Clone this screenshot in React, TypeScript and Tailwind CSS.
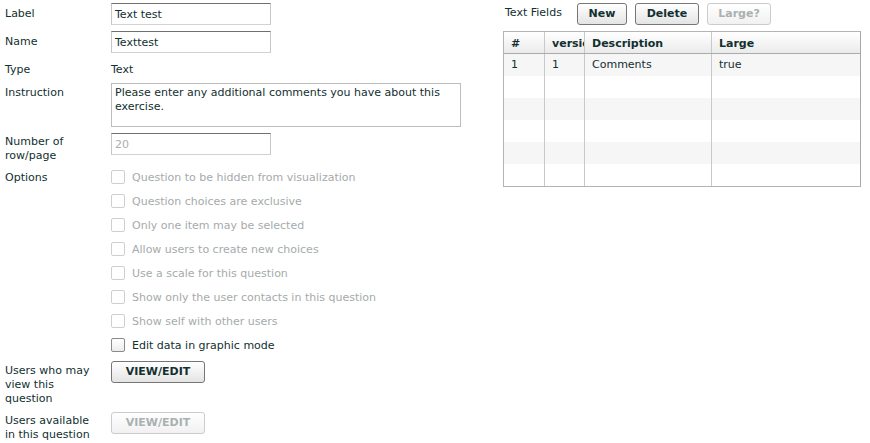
import React from "react";

const font = { fontFamily: '"DejaVu Sans", Verdana, sans-serif' };

function Label({ children, pt }: { children: React.ReactNode; pt: string }) {
  return <div className={`w-[106px] shrink-0 ${pt} text-[#12302f]`}>{children}</div>;
}

function TextInput({ value, disabled }: { value: string; disabled?: boolean }) {
  return (
    <div
      className={`w-[160px] h-[22px] border border-t-[#707070] border-x-[#c6c6c6] border-b-[#d2d2d2] bg-white px-[3px] pt-[4px] ${
        disabled ? "text-[#a9aeae]" : "text-[#12302f]"
      }`}
    >
      {value}
    </div>
  );
}

function Check({ label, enabled }: { label: string; enabled?: boolean }) {
  return (
    <div className="flex items-start h-[14px]">
      <div
        className={`w-[14px] h-[14px] rounded-[2px] border ${
          enabled ? "border-[#8a8a8a] bg-gradient-to-b from-white to-[#ececec]" : "border-[#cfcfcf] bg-white"
        }`}
      />
      <span className={`ml-[7px] pt-[1px] ${enabled ? "text-[#12302f]" : "text-[#a5abab]"}`}>{label}</span>
    </div>
  );
}

function Btn({ children, w, disabled }: { children: React.ReactNode; w: string; disabled?: boolean }) {
  return (
    <div
      className={`${w} h-[22px] shrink-0 rounded-[3px] border flex items-center justify-center font-bold bg-gradient-to-b ${
        disabled
          ? "border-[#cccccc] text-[#a9b1b1] from-white to-[#f1f1f1]"
          : "border-[#767676] text-[#12302f] from-white to-[#e4e4e4]"
      }`}
    >
      {children}
    </div>
  );
}

const cols = ["w-[41px]", "w-[40px]", "w-[127px]", "flex-1"];

function Row({ cells, shaded }: { cells: string[]; shaded?: boolean }) {
  return (
    <div className={`flex h-[22px] ${shaded ? "bg-[#f6f6f6]" : "bg-white"}`}>
      {cols.map((c, i) => (
        <div
          key={i}
          className={`${c} ${i < 3 ? "border-r border-[#c9c9c9]" : ""} pl-[7px] pt-[4px] overflow-hidden whitespace-nowrap text-[#12302f]`}
        >
          {cells[i]}
        </div>
      ))}
    </div>
  );
}

export default function App() {
  const opts = [
    "Question to be hidden from visualization",
    "Question choices are exclusive",
    "Only one item may be selected",
    "Allow users to create new choices",
    "Use a scale for this question",
    "Show only the user contacts in this question",
    "Show self with other users",
  ];
  return (
    <div style={font} className="w-[870px] h-[443px] bg-white text-[11px] leading-[14px] flex overflow-hidden">
      <div className="w-[498px] pl-[5px] flex flex-col">
        <div className="flex mt-[3px]">
          <Label pt="pt-[4px]">Label</Label>
          <TextInput value="Text test" />
        </div>
        <div className="flex mt-[6px]">
          <Label pt="pt-[4px]">Name</Label>
          <TextInput value="Texttest" />
        </div>
        <div className="flex mt-[10px]">
          <Label pt="pt-0">Type</Label>
          <div className="text-[#12302f]">Text</div>
        </div>
        <div className="flex mt-[6px]">
          <Label pt="pt-[3px]">Instruction</Label>
          <div className="w-[350px] h-[44px] border border-[#bdbdbd] px-[3px] pt-[2px] text-[#12302f]">
            Please enter any additional comments you have about this exercise.
          </div>
        </div>
        <div className="flex mt-[6px]">
          <Label pt="pt-[2px]">
            Number of
            <br />
            row/page
          </Label>
          <TextInput value="20" disabled />
        </div>
        <div className="flex mt-[7px]">
          <Label pt="pt-[1px]">Options</Label>
          <div className="flex flex-col gap-[10px]">
            {opts.map((o) => (
              <Check key={o} label={o} />
            ))}
            <Check label="Edit data in graphic mode" enabled />
          </div>
        </div>
        <div className="flex mt-[9px]">
          <Label pt="pt-[3px]">
            Users who may
            <br />
            view this
            <br />
            question
          </Label>
          <Btn w="w-[94px]">VIEW/EDIT</Btn>
        </div>
        <div className="flex mt-[6px]">
          <Label pt="pt-[2px]">
            Users available
            <br />
            in this question
          </Label>
          <Btn w="w-[94px]" disabled>
            VIEW/EDIT
          </Btn>
        </div>
      </div>
      <div className="pl-[5px] flex flex-col">
        <div className="flex items-start mt-[3px]">
          <div className="pt-[3px] ml-[2px] w-[72px] text-[#12302f]">Text Fields</div>
          <Btn w="w-[50px]">New</Btn>
          <div className="w-[8px]" />
          <Btn w="w-[64px]">Delete</Btn>
          <div className="w-[8px]" />
          <Btn w="w-[64px]" disabled>
            Large?
          </Btn>
        </div>
        <div className="mt-[6px] w-[358px] border border-[#b4b4b4] border-r-[#a8a8a8]">
          <div className="flex h-[22px] bg-gradient-to-b from-white to-[#ebebeb] border-b border-[#ababab] font-bold">
            {["#", "version", "Description", "Large"].map((h, i) => (
              <div
                key={h}
                className={`${cols[i]} ${i < 3 ? "border-r border-[#c9c9c9]" : ""} pl-[7px] pt-[5px] overflow-hidden whitespace-nowrap text-[#12302f]`}
              >
                {h}
              </div>
            ))}
          </div>
          <Row cells={["1", "1", "Comments", "true"]} shaded />
          <Row cells={["", "", "", ""]} />
          <Row cells={["", "", "", ""]} shaded />
          <Row cells={["", "", "", ""]} />
          <Row cells={["", "", "", ""]} shaded />
          <Row cells={["", "", "", ""]} />
        </div>
      </div>
    </div>
  );
}
